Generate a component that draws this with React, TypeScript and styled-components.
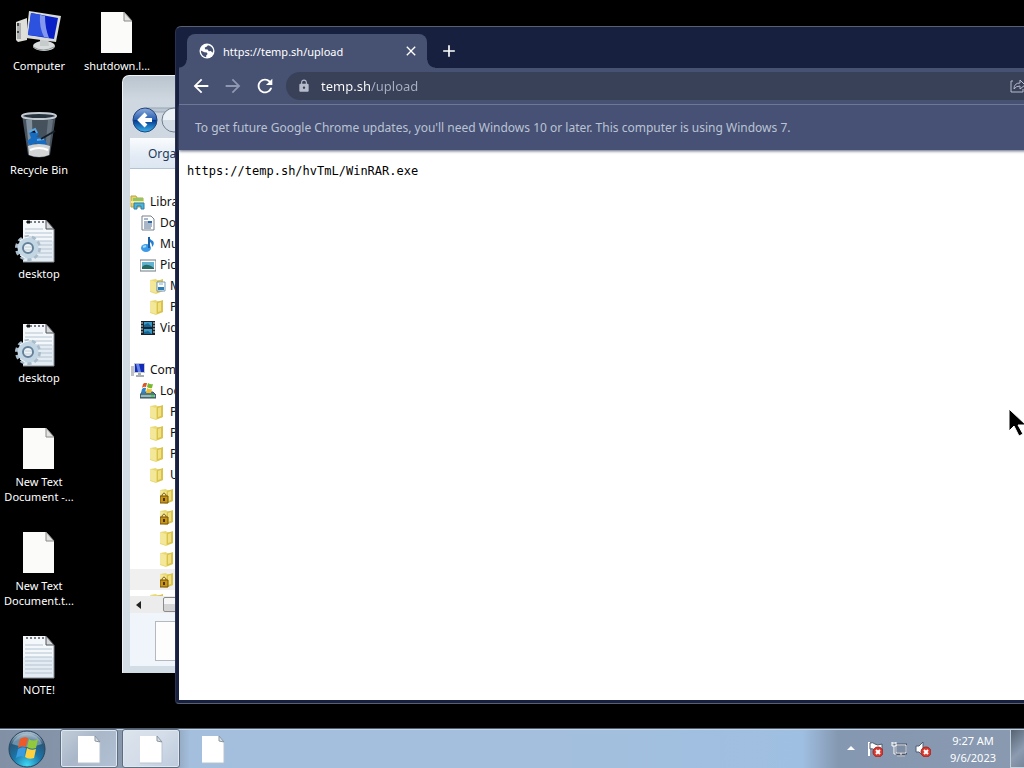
import React from "react";
import styled, { createGlobalStyle } from "styled-components";
import { MdAdd, MdArrowBack, MdArrowForward, MdClose, MdLock, MdRefresh } from "react-icons/md";

const GlobalStyle = createGlobalStyle`
  * { box-sizing: border-box; }
  body { margin: 0; background: #000; font: 11px/15px "Noto Sans", "Open Sans", sans-serif; }
  button { border: 0; padding: 0; margin: 0; background: none; font: inherit; color: inherit; cursor: default; }
  svg { display: block; flex: none; }
  ul { list-style: none; margin: 0; padding: 0; }
`;

const Screen = styled.div`
  display: flex;
  flex-direction: column;
  height: 100vh;
  overflow: hidden;
  position: relative;
`;

const Workspace = styled.main`
  flex: 1;
  min-height: 0;
  position: relative;
  overflow: hidden;
  background: #000;
`;

const IconGrid = styled.div`
  display: grid;
  grid-auto-flow: column;
  grid-template-rows: repeat(7, 104px);
  grid-auto-columns: 78px;
  height: 100%;
`;

const Shortcut = styled.button`
  display: flex;
  flex-direction: column;
  align-items: center;
  gap: 2px;
  padding-top: 8px;
  color: #fff;
  white-space: pre;
  text-align: center;
  text-shadow: 0 1px 2px #000;
`;

/* ---------- Explorer window ---------- */

const Explorer = styled.section`
  position: absolute;
  left: 122px;
  top: 75px;
  bottom: 55px;
  width: 640px;
  display: flex;
  flex-direction: column;
  padding: 0 7px 7px;
  border: 1px solid #eef4f8;
  border-width: 1px 0 0 1px;
  border-radius: 7px 7px 0 0;
  background: linear-gradient(#b9c4ce 0, #cfd8e0 24px, #d3dde5 100%);
  font-size: 12px;
`;

const ExplorerNav = styled.div`
  display: flex;
  align-items: flex-end;
  height: 62px;
  padding: 0 0 4px 2px;
`;

const ExplorerTools = styled.div`
  display: flex;
  align-items: center;
  height: 31px;
  padding-left: 18px;
  border-bottom: 1px solid #b3c3d5;
  background: linear-gradient(#fafcfe, #e3ebf5 60%, #dde7f2);
  color: #1e395b;
`;

const Tree = styled.ul`
  flex: 1;
  min-height: 0;
  overflow: hidden;
  padding-top: 22px;
  background: #fff;
`;

const Row = styled.li<{ $level: number; $active?: boolean }>`
  height: 21px;
  padding-left: ${(p) => p.$level * 10}px;
  background: ${(p) => (p.$active ? "#f0f0f0" : "transparent")};
`;

const RowButton = styled.button`
  display: flex;
  align-items: center;
  gap: 4px;
  height: 21px;
  color: #111;
`;

const Spacer = styled.li`
  height: 21px;
`;

const ScrollTrack = styled.div`
  display: flex;
  align-items: center;
  gap: 22px;
  height: 17px;
  padding-left: 6px;
  background: #ececec;
`;

const ScrollThumb = styled.div`
  flex: 1;
  height: 15px;
  border: 1px solid #8b8b8b;
  border-radius: 2px;
  background: linear-gradient(#f6f6f6 50%, #d4d4d6 50%);
`;

const Details = styled.div`
  height: 53px;
  padding: 8px 0 0 25px;
  background: #f0f5fb;
`;

const DetailsThumb = styled.div`
  width: 32px;
  height: 40px;
  border: 1px solid #b5b9be;
  background: #fdfdfd;
`;

/* ---------- Browser window ---------- */

const Browser = styled.section`
  position: absolute;
  left: 175px;
  right: -70px;
  top: 26px;
  bottom: 24px;
  display: flex;
  flex-direction: column;
  padding: 0 3px 3px;
  border: 1px solid #596070;
  border-left-color: #2a3150;
  border-radius: 6px 6px 4px 4px;
  background: #17203f;
  color: #fff;
  overflow: hidden;
`;

const TabStrip = styled.div`
  display: flex;
  align-items: flex-end;
  gap: 12px;
  height: 41px;
  padding-left: 8px;
`;

const Tab = styled.div`
  position: relative;
  display: flex;
  align-items: center;
  gap: 8px;
  width: 240px;
  height: 34px;
  padding: 0 8px 0 12px;
  border-radius: 8px 8px 0 0;
  background: #475273;

  &::before,
  &::after {
    content: "";
    position: absolute;
    bottom: 0;
    width: 8px;
    height: 8px;
  }
  &::before {
    right: 100%;
    background: radial-gradient(circle at 0 0, transparent 7px, #475273 8px);
  }
  &::after {
    left: 100%;
    background: radial-gradient(circle at 100% 0, transparent 7px, #475273 8px);
  }
`;

const TabTitle = styled.span`
  flex: 1;
`;

const NewTab = styled.button`
  align-self: center;
  padding-top: 7px;
`;

const Toolbar = styled.div`
  display: flex;
  align-items: center;
  gap: 10px;
  height: 37px;
  padding: 0 40px 0 11px;
  border-bottom: 1px solid #727d9b;
  background: #475273;
`;

const ToolButton = styled.button<{ $dim?: boolean }>`
  color: ${(p) => (p.$dim ? "#8f98b0" : "#fff")};
`;

const Omnibox = styled.label`
  flex: 1;
  display: flex;
  align-items: center;
  gap: 10px;
  height: 28px;
  padding: 0 24px 0 11px;
  border-radius: 14px;
  background: #394159;
  color: #b6bccb;
`;

const Address = styled.input`
  flex: 1;
  min-width: 0;
  padding: 0;
  border: 0;
  outline: 0;
  font: 13px/20px "Noto Sans", "Open Sans", sans-serif;
  background: linear-gradient(90deg, #fff 49px, #a9b0c1 49px);
  background-clip: text;
  -webkit-background-clip: text;
  -webkit-text-fill-color: transparent;
`;

const InfoBar = styled.div`
  display: flex;
  align-items: center;
  height: 45px;
  padding-left: 16px;
  background: #465175;
  color: #bcc3d4;
  font-size: 12px;
  line-height: 18px;
  white-space: nowrap;
  box-shadow: 0 1px 3px #5a627a;
  z-index: 1;
`;

const Page = styled.div`
  flex: 1;
  background: #fff;
  color: #000;
`;

const PageText = styled.pre`
  margin: 0;
  padding: 14px 8px;
  font: 12px/15px "DejaVu Sans Mono", "Liberation Mono", monospace;
`;

const Cursor = styled.div`
  position: absolute;
  right: 0;
  top: 408px;
  width: 16px;
  overflow: hidden;
`;

/* ---------- Taskbar ---------- */

const Taskbar = styled.footer`
  display: flex;
  align-items: stretch;
  height: 40px;
  border-top: 1px solid #4f5d6d;
  box-shadow: inset 0 1px #c4d5e6;
  background: linear-gradient(90deg, #8190a4 0, #8c9bb0 170px, #a3bfdd 190px, #a3bfdd 560px, #9fbfe2 calc(100% - 222px), #8598b1 calc(100% - 186px), #8999b0 100%);
`;

const Start = styled.button`
  width: 60px;
  padding-left: 8px;
`;

const Task = styled.button<{ $state?: "open" | "active" }>`
  display: grid;
  place-items: center;
  width: 58px;
  margin-right: 4px;
  border: 1px solid ${(p) => (p.$state ? "#5f6d80" : "transparent")};
  border-radius: 3px;
  box-shadow: ${(p) => (p.$state ? "inset 0 0 0 1px #dfe8f1" : "none")};
  background: ${(p) =>
    p.$state === "active"
      ? "linear-gradient(135deg, #dce4ed, #d3dce8 50%, #bccadc)"
      : p.$state === "open"
      ? "linear-gradient(135deg, #c4ced9, #a9b7c9 45%, #b1c0d3)"
      : "none"};
`;

const Tray = styled.div`
  display: flex;
  align-items: center;
  gap: 8px;
  margin-left: auto;
  padding-right: 6px;
`;

const Clock = styled.time`
  width: 62px;
  margin-left: 3px;
  color: #fff;
  line-height: 17px;
  text-align: center;
`;

const ShowDesktop = styled.button`
  width: 14px;
  border: 1px solid #c5d0dd;
  border-right: 0;
  background: linear-gradient(135deg, #556373, #8c9bb0 60%, #77869a);
`;

/* ---------- Drawings ---------- */

const BlankDoc = () => (
  <svg width="48" height="48" viewBox="0 0 48 48">
    <path d="M8 4h23l8 9v32H8z" fill="#fbfbfa" />
    <path d="M31 4l8 9h-8z" fill="#e2e2e0" stroke="#8a8a88" strokeWidth="1" />
  </svg>
);

const NotePage = () => (
  <>
    <path d="M8 4h23l8 9v33H8z" fill="#f5f8fb" />
    <path d="M8 25h31v21H8z" fill="#dbe7f0" opacity=".7" />
    <path d="M10 13h18M10 17h27M10 21h27M10 25h27M10 29h27M10 33h27M10 37h27M10 41h27" stroke="#b4c3d0" />
    <path d="M39 13v33H8" fill="none" stroke="#858d95" />
    <path d="M31 4l8 9h-8z" fill="#d5d7da" stroke="#4e5257" />
    <path d="M11 6h2M15 6h2M19 6h2M23 6h2M27 6h2" stroke="#777c82" strokeWidth="2" />
  </>
);

const Note = () => (
  <svg width="48" height="48" viewBox="0 0 48 48">
    <NotePage />
  </svg>
);

const Settings = () => (
  <svg width="48" height="48" viewBox="0 0 48 48">
    <NotePage />
    <path d="M12 6h3" stroke="#111" strokeWidth="3" />
    <circle cx="13" cy="32" r="11" fill="none" stroke="#a9bccb" strokeWidth="4" strokeDasharray="4 2.9" />
    <circle cx="13" cy="32" r="8" fill="#d9e7f0" stroke="#c3d6e3" strokeWidth="5" />
    <circle cx="13" cy="32" r="5" fill="#edf3f7" stroke="#65819a" strokeWidth="2" />
    <path d="M5 25l4-3 5-1M5 39l5 3" fill="none" stroke="#f5fafc" strokeWidth="1" />
    <path d="M10 31h7M10 34h6" stroke="#c3d0da" />
  </svg>
);

const Computer = () => (
  <svg width="48" height="48" viewBox="0 0 48 48">
    <path d="M1 14l11-4v22L3 34l-2-2z" fill="#dedfda" />
    <path d="M2 15h4v16H2z" fill="#aaaeae" />
    <path d="M3 15v3M3 23v2" stroke="#444" strokeWidth="2" />
    <ellipse cx="29" cy="38" rx="11" ry="5" fill="#dadddd" />
    <path d="M18 39q10 6 21 0" fill="none" stroke="#8f9899" />
    <path d="M25 31l8 1 1 6h-9z" fill="#c6cccc" />
    <path d="M14 3l32 5-5 26-30-4z" fill="#d8dbd8" />
    <path d="M16 5l27 5-4 21-26-4z" fill="#0820c6" />
    <path d="M16 5l11 2q-1 15 4 22l-18-2z" fill="#2d52df" />
    <path d="M25 7l5 1q0 12 4 22l-5-1q-5-10-4-22z" fill="#8497ef" />
  </svg>
);

const Bin = () => (
  <svg width="48" height="48" viewBox="0 0 48 48">
    <path d="M7 3h34l-6 40q-11 5-22 0z" fill="#45525e" />
    <path d="M11 8h6l1 30-4-1z" fill="#81909d" />
    <path d="M33 8h5l-4 29-4 1z" fill="#66737f" />
    <ellipse cx="24" cy="4" rx="17" ry="3" fill="#27333e" stroke="#c4cbd1" strokeWidth="2" />
    <path d="M14 20l6-3 4 5-3 3 8 1 3 6-6 4-5-5-6 3-3-5 4-3z" fill="#176cc2" />
    <path d="M14 20l6-3 2 4M22 28l7-1" stroke="#5fa7e1" strokeWidth="2" />
    <path d="M26 27l14-8" stroke="#141d27" strokeWidth="2" />
    <path d="M13 34q11-4 22 0l-1 9q-10 4-20 0z" fill="#d1d3d4" />
    <path d="M15 38q9-4 18 0" stroke="#fff" fill="none" strokeWidth="2" />
  </svg>
);

const Globe = () => (
  <svg width="16" height="16" viewBox="0 0 16 16">
    <circle cx="8" cy="8" r="7.5" fill="#fff" />
    <path d="M9 2.2L7.6 3.8 5.8 4.4 6 6.2l2.6.4 1.2 1.6 2-.2 1.8 1.8.6-2.4Q13.8 3.6 9 2.2z" fill="#475273" />
    <path d="M1.8 7.4l3.6 1.8 2.4.2.8 1.6-1.4 1.4v1.8Q2 13 1.8 7.4z" fill="#475273" />
  </svg>
);

const NavArrows = () => (
  <svg width="66" height="28" viewBox="0 0 66 28">
    <defs>
      <linearGradient id="nav" x1="0" y1="0" x2="0" y2="1">
        <stop offset="0" stopColor="#8cacdb" />
        <stop offset=".48" stopColor="#2a5eaf" />
        <stop offset=".52" stopColor="#063a91" />
        <stop offset="1" stopColor="#39b5ed" />
      </linearGradient>
    </defs>
    <path d="M14 2h38v4H24z" fill="#bac6d2" stroke="#98a5b3" />
    <circle cx="13" cy="14" r="12" fill="url(#nav)" stroke="#24437c" />
    <path d="M20 14H8m6-6l-6 6 6 6" fill="none" stroke="#fff" strokeWidth="4" />
    <circle cx="42" cy="14" r="12" fill="#d3dce5" stroke="#6f7f91" />
    <path d="M31 14h22a11 11 0 0 0-22 0" fill="#edf2f6" />
  </svg>
);

type TreeKind = "lib" | "doc" | "music" | "pic" | "picfolder" | "folder" | "lock" | "video" | "pc" | "disk";

const TreeIcon = ({ kind }: { kind: TreeKind }) => (
  <svg width="16" height="16" viewBox="0 0 16 16">
    {(kind === "folder" || kind === "lock" || kind === "picfolder") && (
      <>
        <path d="M0 2l6-1 1 1h6v11l-7 3-6-2z" fill="#e9d975" />
        <path d="M0 2l6 2v11l-6-2z" fill="#f3e899" />
        <path d="M7 3l6-2v12l-6 2z" fill="#d9c34c" />
        <path d="M8 4l3-1v9l-3 1z" fill="#f1e07f" />
      </>
    )}
    {kind === "picfolder" && (
      <>
        <path d="M7 4h8v9H7z" fill="#fff" stroke="#7599ba" />
        <path d="M8 9h6v3H8z" fill="#2c7cb5" />
        <path d="M9 6h4" stroke="#82abc8" />
      </>
    )}
    {kind === "lock" && (
      <>
        <path d="M2 9V7q2-4 4 0v2" fill="none" stroke="#806119" strokeWidth="1" />
        <path d="M0 8h8v7H0z" fill="#c6951c" stroke="#775008" />
        <path d="M4 10v3" stroke="#4f3504" strokeWidth="2" />
      </>
    )}
    {kind === "lib" && (
      <>
        <path d="M1 2h5l1 2h6v9H1z" fill="#ead468" stroke="#b5a33f" />
        <path d="M3 4h10v3H3z" fill="#93c566" />
        <path d="M1 7h13v2H1z" fill="#f8ec9b" />
        <path d="M4 15V9h10v6h-3v-3H7v3z" fill="#4ab4dd" stroke="#327da4" />
      </>
    )}
    {kind === "doc" && (
      <>
        <path d="M2 1h9l3 3v11H2z" fill="#fff" stroke="#76818d" />
        <path d="M4 4h4M4 7h8M4 9h8M4 11h8M4 13h7" stroke="#536f91" />
        <path d="M8 6h4v2H8z" fill="#286bad" />
      </>
    )}
    {kind === "music" && (
      <>
        <path d="M9 0q0 3 4 5 2 3-1 6 0-5-3-5v5z" fill="#247ed0" />
        <ellipse cx="6" cy="12" rx="5" ry="4" fill="#3c9be8" />
        <path d="M9 1v11" stroke="#185fa6" strokeWidth="2" />
        <path d="M3 11l3-1" stroke="#a4d8fa" strokeWidth="2" />
      </>
    )}
    {kind === "pic" && (
      <>
        <path d="M0 3h16v11H0z" fill="#fff" stroke="#6d7880" />
        <path d="M2 5h12v7H2z" fill="#60b2cf" />
        <path d="M2 10q4-5 12 1v1H2z" fill="#276b65" />
      </>
    )}
    {kind === "video" && (
      <>
        <path d="M1 1h14v14H1z" fill="#17242d" />
        <path d="M4 2h8v5H4zM4 9h8v5H4z" fill="#3b99c6" />
        <path d="M4 5l4-2 4 4H4zM4 12l4-1 4 3H4z" fill="#17638e" />
        <path d="M2 2v12M14 2v12" stroke="#dce4e8" strokeDasharray="2 1" />
      </>
    )}
    {kind === "pc" && (
      <>
        <path d="M1 4h3v10H1z" fill="#bcc2c6" />
        <path d="M4 1h11v10H4z" fill="#c4cad1" />
        <path d="M5 2h9v8H5z" fill="#142bb7" />
        <path d="M6 2h3l2 8H8z" fill="#6a86e5" />
        <path d="M8 11h3v2h3v2H6v-2h2z" fill="#a7afb3" />
      </>
    )}
    {kind === "disk" && (
      <>
        <path d="M2 9h11l3 3v3H0v-3z" fill="#4d7884" stroke="#38535b" />
        <path d="M1 12h14v2H1z" fill="#9cb5b9" />
        <path d="M11 13h3" stroke="#4fd04d" strokeWidth="2" />
        <path d="M3 1q2-2 4-1L6 4Q4 3 2 5z" fill="#db5626" />
        <path d="M8 0q3 2 5 1l-1 4q-2 1-5-1z" fill="#79b82f" />
        <path d="M2 6q2-2 4-1L5 10H1z" fill="#2f83c6" />
        <path d="M7 5q3 2 5 1l-1 4H6z" fill="#efc02c" />
      </>
    )}
  </svg>
);

const StartOrb = () => (
  <svg width="38" height="38" viewBox="0 0 38 38">
    <defs>
      <radialGradient id="orb" cx=".5" cy=".95" r=".9">
        <stop offset="0" stopColor="#40d8f4" />
        <stop offset=".45" stopColor="#1a75a8" />
        <stop offset=".8" stopColor="#2a5678" />
        <stop offset="1" stopColor="#a4b8c8" />
      </radialGradient>
    </defs>
    <circle cx="19" cy="19" r="18" fill="url(#orb)" stroke="#24465f" />
    <path d="M4 14A16 16 0 0 1 34 14Q19 20 4 14z" fill="#d5e3ec" opacity=".4" />
    <path d="M12 9q4-3 8-1l-2 9q-4-2-8 1z" fill="#ed5a2a" />
    <path d="M21 9q4 3 9 0l-2 9q-5 2-9-1z" fill="#91c83c" />
    <path d="M10 19q4-3 8-1l-2 9q-4-2-8 1z" fill="#3b9be1" />
    <path d="M19 18q4 3 9 1l-2 9q-5 2-9-1z" fill="#fdd140" />
  </svg>
);

const TaskDoc = () => (
  <svg width="26" height="30" viewBox="0 0 26 30">
    <path d="M2 2h17l5 6v21H2z" fill="#fff" />
    <path d="M19 2v5l5 1z" fill="#dce1e5" stroke="#8795a2" />
    <path d="M24 8v21H2" fill="none" stroke="#b8c4cf" />
  </svg>
);

const RedCross = () => (
  <>
    <circle cx="11" cy="11" r="5" fill="#d63a31" stroke="#a82420" />
    <path d="M9 9l4 4M13 9l-4 4" stroke="#fff" strokeWidth="2" />
  </>
);

const libraries: [TreeKind, number, string][] = [
  ["lib", 0, "Libraries"],
  ["doc", 1, "Documents"],
  ["music", 1, "Music"],
  ["pic", 1, "Pictures"],
  ["picfolder", 2, "My Pictures"],
  ["folder", 2, "Public Pictures"],
  ["video", 1, "Videos"],
];

const drives: [TreeKind, number, string][] = [
  ["pc", 0, "Computer"],
  ["disk", 1, "Local Disk (C:)"],
  ["folder", 2, "PerfLogs"],
  ["folder", 2, "Program Files"],
  ["folder", 2, "ProgramData"],
  ["folder", 2, "Users"],
  ["lock", 3, ""],
  ["lock", 3, ""],
  ["folder", 3, ""],
  ["folder", 3, ""],
  ["lock", 3, ""],
  ["folder", 2, ""],
];

const TreeRows = ({ rows, active }: { rows: [TreeKind, number, string][]; active?: number }) => (
  <>
    {rows.map(([kind, level, name], i) => (
      <Row key={i} $level={level} $active={i === active}>
        <RowButton aria-label={name || "Folder"}>
          <TreeIcon kind={kind} />
          {name}
        </RowButton>
      </Row>
    ))}
  </>
);

const shortcuts: [React.FC, string][] = [
  [Computer, "Computer"],
  [Bin, "Recycle Bin"],
  [Settings, "desktop"],
  [Settings, "desktop"],
  [BlankDoc, "New Text\nDocument -..."],
  [BlankDoc, "New Text\nDocument.t..."],
  [Note, "NOTE!"],
  [BlankDoc, "shutdown.l..."],
];

export default function App() {
  return (
    <Screen>
      <GlobalStyle />
      <Workspace>
        <IconGrid>
          {shortcuts.map(([Icon, name], i) => (
            <Shortcut key={i}>
              <Icon />
              {name}
            </Shortcut>
          ))}
        </IconGrid>

        <Explorer>
          <ExplorerNav>
            <button aria-label="Back and forward">
              <NavArrows />
            </button>
          </ExplorerNav>
          <ExplorerTools>
            <button>Organize</button>
          </ExplorerTools>
          <Tree>
            <TreeRows rows={libraries} />
            <Spacer />
            <TreeRows rows={drives} active={10} />
          </Tree>
          <ScrollTrack>
            <svg width="5" height="8" viewBox="0 0 5 8">
              <path d="M5 0v8L0 4z" fill="#222" />
            </svg>
            <ScrollThumb />
          </ScrollTrack>
          <Details>
            <DetailsThumb />
          </Details>
        </Explorer>

        <Browser>
          <TabStrip>
            <Tab>
              <Globe />
              <TabTitle>https://temp.sh/upload</TabTitle>
              <button aria-label="Close tab">
                <MdClose size={16} />
              </button>
            </Tab>
            <NewTab aria-label="New tab">
              <MdAdd size={20} />
            </NewTab>
          </TabStrip>
          <Toolbar>
            <ToolButton aria-label="Back">
              <MdArrowBack size={22} />
            </ToolButton>
            <ToolButton aria-label="Forward" $dim>
              <MdArrowForward size={22} />
            </ToolButton>
            <ToolButton aria-label="Reload">
              <MdRefresh size={22} />
            </ToolButton>
            <Omnibox>
              <MdLock size={14} />
              <Address aria-label="Address" defaultValue="temp.sh/upload" spellCheck={false} />
              <button aria-label="Share this page">
                <svg width="16" height="16" viewBox="0 0 16 16" fill="none" stroke="currentColor">
                  <path d="M3 3H1v11h12v-3" />
                  <path d="M4 11q0-6 6-6V2l5 5-5 4V8q-4 0-6 3z" />
                </svg>
              </button>
            </Omnibox>
          </Toolbar>
          <InfoBar>
            To get future Google Chrome updates, you'll need Windows 10 or later. This computer is using Windows 7.
          </InfoBar>
          <Page>
            <PageText>https://temp.sh/hvTmL/WinRAR.exe</PageText>
          </Page>
        </Browser>

        <Cursor>
          <svg width="20" height="30" viewBox="0 0 20 30">
            <path d="M1 1v22l5-5 5 10 4-2-5-9h8z" fill="#000" stroke="#fff" />
          </svg>
        </Cursor>
      </Workspace>

      <Taskbar>
        <Start aria-label="Start">
          <StartOrb />
        </Start>
        <Task aria-label="Document window" $state="open">
          <TaskDoc />
        </Task>
        <Task aria-label="Active document window" $state="active">
          <TaskDoc />
        </Task>
        <Task aria-label="Pinned document">
          <TaskDoc />
        </Task>
        <Tray>
          <button aria-label="Show hidden icons">
            <svg width="16" height="5" viewBox="0 0 16 5">
              <path d="M8 0l4 4H4z" fill="#fff" />
            </svg>
          </button>
          <button aria-label="Action Center">
            <svg width="16" height="16" viewBox="0 0 16 16">
              <path d="M2 1v14" stroke="#fff" strokeWidth="2" />
              <path d="M3 2q3-1 5 1t7 0v6q-4 2-7 0T3 8z" fill="#fff" stroke="#4f5d70" />
              <RedCross />
            </svg>
          </button>
          <button aria-label="Network">
            <svg width="16" height="16" viewBox="0 0 16 16" fill="none">
              <path d="M5 4h10v8H5zM10 12v2M6 15h8" stroke="#46546a" strokeWidth="3" />
              <path d="M6 5h8v6H6z" fill="#7c8da5" />
              <path d="M5 4h10v8H5zM10 12v2M6 15h8M1 1v4h4V1M1 2h4M3 5v8h2" stroke="#fff" />
            </svg>
          </button>
          <button aria-label="Volume muted">
            <svg width="16" height="16" viewBox="0 0 16 16">
              <path d="M1 5h3l4-4v14l-4-4H1z" fill="#fff" stroke="#4f5d70" />
              <RedCross />
            </svg>
          </button>
          <Clock>
            9:27 AM
            <br />
            9/6/2023
          </Clock>
        </Tray>
        <ShowDesktop aria-label="Show desktop" />
      </Taskbar>
    </Screen>
  );
}
